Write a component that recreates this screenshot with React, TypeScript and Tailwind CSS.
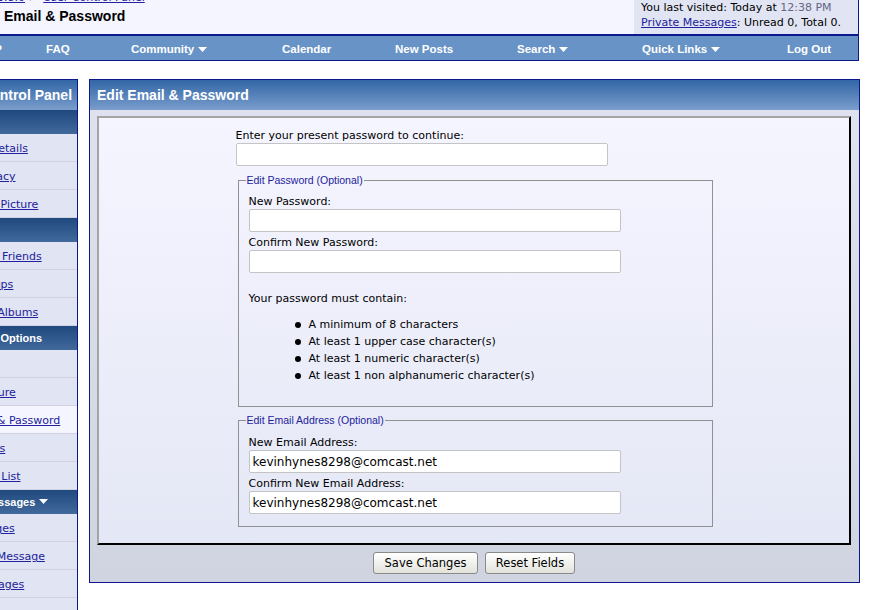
import React from 'react';

const verdana = "font-['DejaVu_Sans',Verdana,sans-serif]";
const tahoma = "font-['Liberation_Sans',Tahoma,Arial,sans-serif]";
const link = 'text-[#22229c] underline';

function Caret() {
  return (
    <svg width="9" height="5" viewBox="0 0 9 5" className="inline-block ml-[4px] mb-[1px]">
      <path d="M0 0h9L4.5 5z" fill="#fff" />
    </svg>
  );
}

const navItems: Array<{ label: string; w: string; menu?: boolean }> = [
  { label: 'FAQ', w: 'w-[85px]' },
  { label: 'Community', w: 'w-[151px]', menu: true },
  { label: 'Calendar', w: 'w-[113px]' },
  { label: 'New Posts', w: 'w-[122px]' },
  { label: 'Search', w: 'w-[125px]', menu: true },
  { label: 'Quick Links', w: 'w-[145px]', menu: true },
];

const sideGroups: Array<{ title: string; menu?: boolean; items: string[] }> = [
  { title: 'My Profile', items: ['Edit Your Details', 'Profile Privacy', 'Edit Profile Picture'] },
  { title: 'Social', items: ['Contacts & Friends', 'Social Groups', 'Pictures & Albums'] },
  {
    title: 'Settings & Options',
    items: ['Edit Avatar', 'Edit Signature', 'Edit Email & Password', 'Edit Options', 'Edit Ignore List'],
  },
  { title: 'Private Messages', menu: true, items: ['List Messages', 'Send New Message', 'Track Messages', 'Edit Folders'] },
];

const rules = [
  'A minimum of 8 characters',
  'At least 1 upper case character(s)',
  'At least 1 numeric character(s)',
  'At least 1 non alphanumeric character(s)',
];

function Field({ value }: { value?: string }) {
  return (
    <input
      type="text"
      defaultValue={value}
      className={`block w-[372px] h-[23px] bg-white border border-[#c4c4c4] rounded-[2px] px-[3px] text-[12px] text-black outline-none ${verdana}`}
    />
  );
}

export default function App() {
  return (
    <div className={`w-[882px] h-[610px] overflow-hidden bg-white text-[11px] text-black ${verdana}`}>
      <div className="-ml-[68px] -mt-[10px] w-[928px]">
        {/* breadcrumb */}
        <div className="flex w-[927px] h-[45px] border-r border-b border-[#0b198c]">
          <div className="flex-1 bg-[#f5f5ff] pt-[1px]">
            <div className="flex leading-[14px] whitespace-nowrap">
              <span className="w-[93px] text-right">
                <a className={link}>vBulletin 3.8.0</a>
              </span>
              <span className="whitespace-pre"> &gt; </span>
              <a className={`${link} ml-[2px]`}>User Control Panel</a>
            </div>
            <div className={`mt-[2px] pl-[72px] leading-[18px] text-[14px] font-bold ${tahoma}`}>Email &amp; Password</div>
          </div>
          <div className="w-[224px] bg-[#e1e4f2] pl-[7px] pt-[10px] leading-[15px] whitespace-nowrap">
            <div>
              You last visited: Today at <span className="text-[#666686]">12:38 PM</span>
            </div>
            <div>
              <a className={link}>Private Messages</a>: Unread 0, Total 0.
            </div>
          </div>
        </div>

        {/* navbar */}
        <div
          className={`flex w-[927px] h-[26px] border border-[#0b198c] bg-[#6893c6] text-white font-bold text-[11.5px] pt-[2px] leading-[22px] whitespace-nowrap ${tahoma}`}
        >
          <div className="w-[113px] text-right pr-[44px]">User CP</div>
          {navItems.map((n) => (
            <div key={n.label} className={n.w}>
              {n.label}
              {n.menu && <Caret />}
            </div>
          ))}
          <div className="flex-1">Log Out</div>
        </div>

        <div className="mt-[18px] flex gap-[11px] items-start">
          {/* sidebar */}
          <div className="w-[146px] border border-[#0b198c] bg-[#d1d1e1]">
            <div
              className={`h-[30px] pl-[13px] flex items-center bg-gradient-to-b from-[#3166a6] to-[#7a9dcc] text-white font-bold text-[14px] whitespace-nowrap ${tahoma}`}
            >
              User Control Panel
            </div>
            {sideGroups.map((g) => (
              <div key={g.title}>
                <div
                  className={`h-[24px] pl-[10px] flex items-center bg-gradient-to-b from-[#1f497f] to-[#41699c] text-white font-bold text-[11px] whitespace-nowrap ${tahoma}`}
                >
                  {g.title}
                  {g.menu && <Caret />}
                </div>
                {g.items.map((it) => (
                  <div
                    key={it}
                    className={`h-[28px] pl-[5px] pt-[4px] flex items-center border-b border-[#d1d1e1] whitespace-nowrap ${
                      it === 'Edit Email & Password' ? 'bg-[#f5f5ff]' : 'bg-[#e1e4f2]'
                    }`}
                  >
                    <a className={link}>{it}</a>
                  </div>
                ))}
              </div>
            ))}
          </div>

          {/* main panel */}
          <div className="w-[771px] border border-[#0b198c]">
            <div
              className={`h-[30px] pl-[7px] flex items-center bg-gradient-to-b from-[#3166a6] to-[#7a9dcc] text-white font-bold text-[14px] ${tahoma}`}
            >
              Edit Email &amp; Password
            </div>
            <div className="bg-gradient-to-b from-[#dfe2ee] to-[#d0d4e1] pt-[6px] pl-[7px] pr-[8px] pb-[8px]">
              <div className="border-2 border-t-[#a5a5a5] border-l-[#a5a5a5] border-b-black border-r-black bg-gradient-to-b from-[#f5f5ff] to-[#e4e7f5]">
                <div className="w-[477px] mx-auto pt-[10px] pb-[16px]">
                  <div className="leading-[15px]">Enter your present password to continue:</div>
                  <Field />

                  <fieldset className="mt-[8px] ml-[2px] w-[475px] border border-[#919191] pl-[10px] pb-[22px]">
                    <legend className={`-ml-[3px] px-[1px] text-[10.5px] leading-[13px] text-[#22229c] ${tahoma}`}>
                      Edit Password (Optional)
                    </legend>
                    <div className="mt-[7px] leading-[15px]">New Password:</div>
                    <Field />
                    <div className="mt-[3px] leading-[15px]">Confirm New Password:</div>
                    <Field />
                    <div className="mt-[18px] leading-[15px]">Your password must contain:</div>
                    <ul className="mt-[10px] pl-[46px] leading-[17px]">
                      {rules.map((r) => (
                        <li key={r} className="flex items-center">
                          <span className="w-[6px] h-[6px] rounded-full bg-black mr-[8px]" />
                          {r}
                        </li>
                      ))}
                    </ul>
                  </fieldset>

                  <fieldset className="mt-[7px] ml-[2px] w-[475px] border border-[#919191] pl-[10px] pb-[12px]">
                    <legend className={`-ml-[3px] px-[1px] text-[10.5px] leading-[13px] text-[#22229c] ${tahoma}`}>
                      Edit Email Address (Optional)
                    </legend>
                    <div className="mt-[8px] leading-[15px]">New Email Address:</div>
                    <Field value="kevinhynes8298@comcast.net" />
                    <div className="mt-[3px] leading-[15px]">Confirm New Email Address:</div>
                    <Field value="kevinhynes8298@comcast.net" />
                  </fieldset>
                </div>
              </div>

              <div className="pt-[7px] flex justify-center gap-[7px]">
                <button className="h-[22px] w-[105px] pt-[1px] rounded-[3px] border border-[#8a8a8a] bg-gradient-to-b from-white to-[#e3e3dc] text-[11.5px] text-black">
                  Save Changes
                </button>
                <button className="h-[22px] w-[90px] pt-[1px] rounded-[3px] border border-[#8a8a8a] bg-gradient-to-b from-white to-[#e3e3dc] text-[11.5px] text-black">
                  Reset Fields
                </button>
              </div>
            </div>
          </div>
        </div>
      </div>
    </div>
  );
}
